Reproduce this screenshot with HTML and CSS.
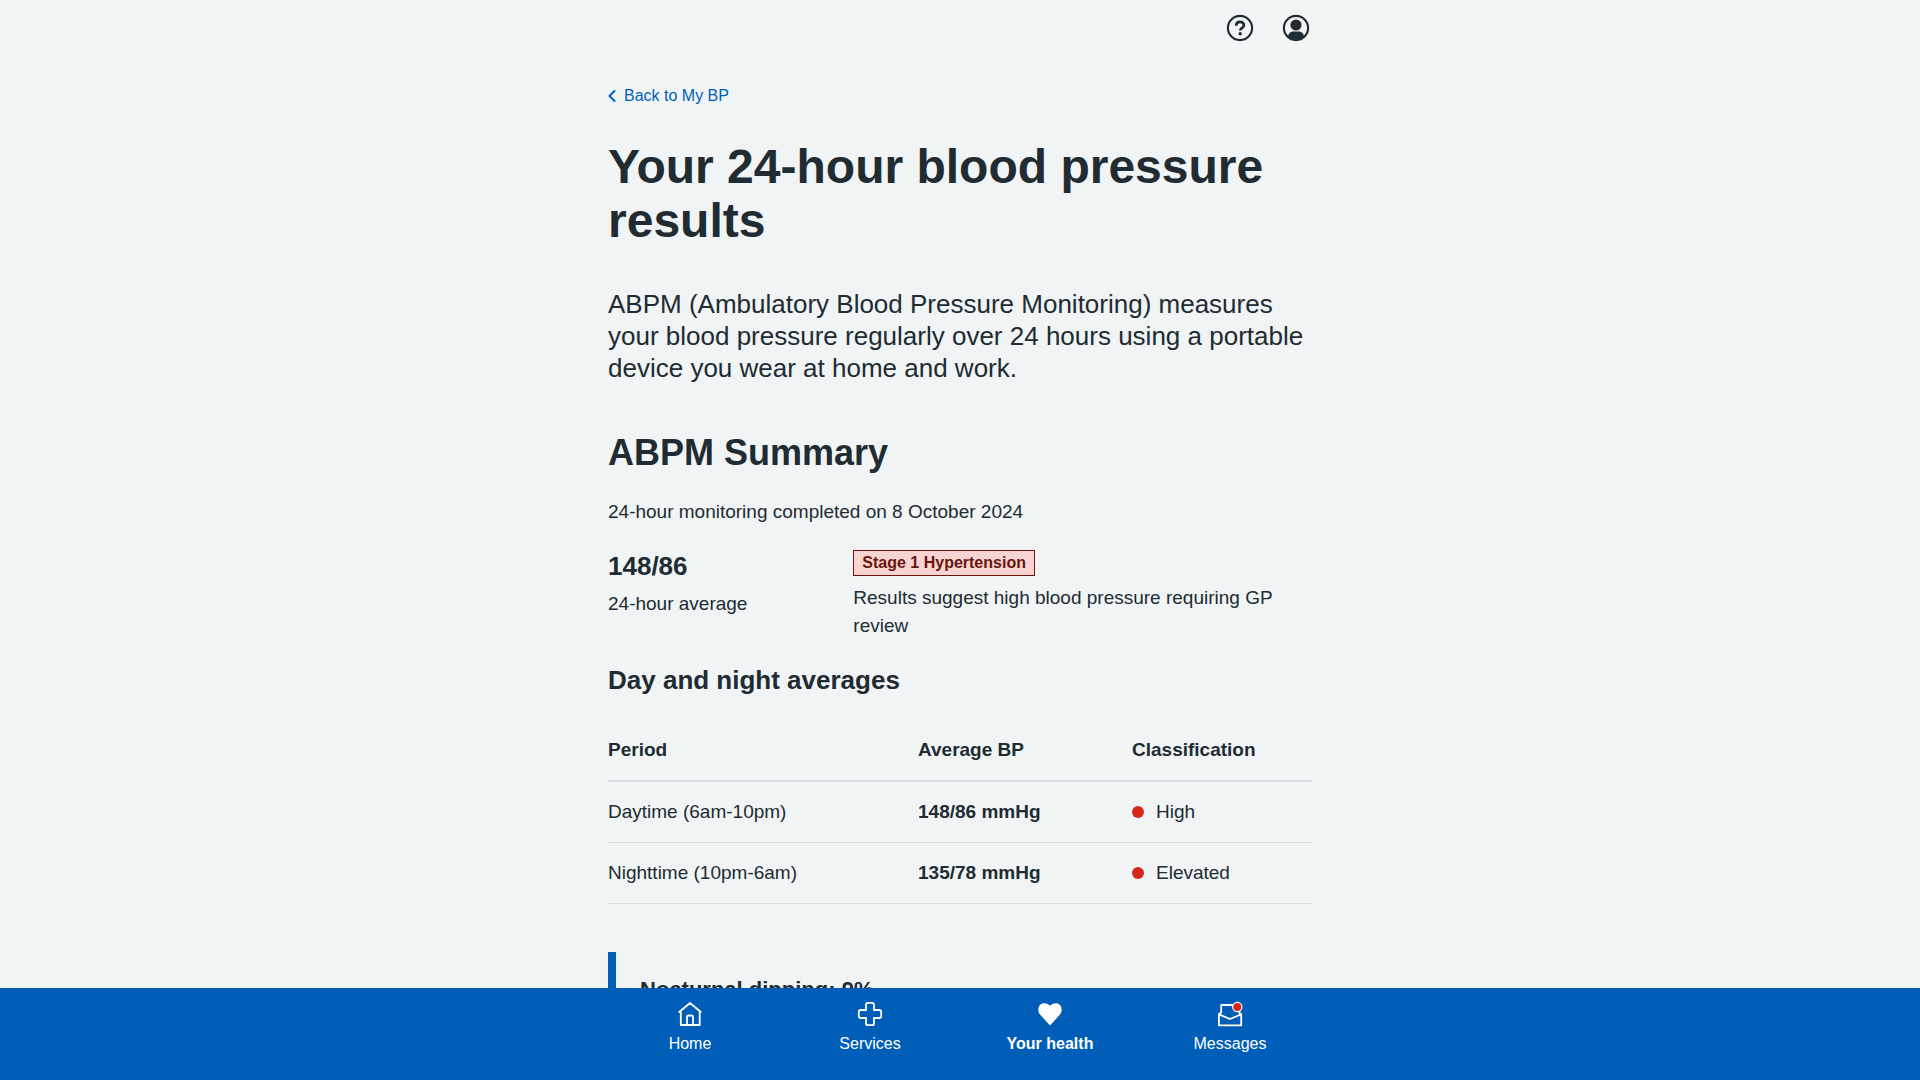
FILE: index.html
```html
<!DOCTYPE html>
<html lang="en">
<head>
<meta charset="utf-8">
<meta name="viewport" content="width=device-width, initial-scale=1">
<title>Your 24-hour blood pressure results</title>
<link rel="stylesheet" href="styles.css">
</head>
<body>
<header class="header container">
  <a class="header-link" href="#help" aria-label="Help">
    <svg viewBox="0 0 28 28" width="28" height="28" fill="none" stroke="currentColor" aria-hidden="true">
      <circle cx="14" cy="14" r="12.1" stroke-width="2.1"/>
      <path d="M10.200 11.800c0-2.500 1.600-4 3.800-4s3.900 1.400 3.900 3.500c0 2.600-3.600 2.700-3.600 5.300" stroke-width="2.700"/>
      <circle cx="14.200" cy="19.700" r="1.700" fill="currentColor" stroke="none"/>
    </svg>
  </a>
  <a class="header-link" href="#account" aria-label="Account">
    <svg viewBox="0 0 28 28" width="28" height="28" aria-hidden="true">
      <circle cx="14" cy="14" r="12.1" fill="none" stroke="currentColor" stroke-width="2.1"/>
      <circle cx="14" cy="11" r="5.600" fill="currentColor"/>
      <path d="M6 22.500C6.500 19 8.500 17.500 11 17.500h6c2.500 0 4.500 1.500 5 5C19.500 25 17 26.200 14 26.200S8.500 25 6 22.500z" fill="currentColor"/>
    </svg>
  </a>
</header>
<main class="main container">
  <a class="back-link" href="#my-bp">
    <svg viewBox="0 0 8 12" width="8" height="12" fill="none" stroke="currentColor" stroke-width="2" stroke-linecap="round" stroke-linejoin="round" aria-hidden="true"><path d="M6.500 1 1.500 6l5 5"/></svg>
    Back to My BP
  </a>
  <h1 class="title">Your 24-hour blood pressure results</h1>
  <p class="lead">ABPM (Ambulatory Blood Pressure Monitoring) measures your blood pressure regularly over 24 hours using a portable device you wear at home and work.</p>
  <h2 class="section-title">ABPM Summary</h2>
  <p>24-hour monitoring completed on 8 October 2024</p>
  <div class="summary">
    <div class="reading">
      <p class="reading-value">148/86</p>
      <p>24-hour average</p>
    </div>
    <div class="result">
      <strong class="tag">Stage 1 Hypertension</strong>
      <p>Results suggest high blood pressure requiring GP review</p>
    </div>
  </div>
  <h3 class="subtitle">Day and night averages</h3>
  <table class="averages">
    <thead>
      <tr><th class="col-period" scope="col">Period</th><th class="col-average" scope="col">Average BP</th><th scope="col">Classification</th></tr>
    </thead>
    <tbody>
      <tr><td>Daytime (6am-10pm)</td><td><strong>148/86 mmHg</strong></td><td><span class="status">High</span></td></tr>
      <tr><td>Nighttime (10pm-6am)</td><td><strong>135/78 mmHg</strong></td><td><span class="status">Elevated</span></td></tr>
    </tbody>
  </table>
  <section class="inset">
    <h3 class="inset-title">Nocturnal dipping: 9%</h3>
  </section>
</main>
<nav class="bottom-nav" aria-label="Main">
  <ul class="nav-list">
    <li><a class="nav-link" href="#home">
      <svg viewBox="0 0 28 28" width="28" height="28" fill="none" stroke="currentColor" stroke-width="1.800" stroke-linecap="round" stroke-linejoin="round" aria-hidden="true"><path d="M3.200 12 14 3l10.800 9M4.800 11v14h18.900V11M11 25v-8c0-1 .5-1.500 1.500-1.500h3c1 0 1.500.5 1.500 1.500v8"/></svg>
      Home</a></li>
    <li><a class="nav-link" href="#services">
      <svg viewBox="0 0 28 28" width="28" height="28" fill="none" stroke="currentColor" stroke-width="1.800" aria-hidden="true"><path d="M12 2.800h4q2 0 2 2V10h5.200q2 0 2 2v4q0 2-2 2H18v5.200q0 2-2 2h-4q-2 0-2-2V18H4.800q-2 0-2-2v-4q0-2 2-2H10V4.800q0-2 2-2z"/></svg>
      Services</a></li>
    <li><a class="nav-link nav-link-current" href="#health" aria-current="page">
      <svg viewBox="0 0 28 28" width="28" height="28" fill="currentColor" aria-hidden="true"><path d="M14 25.500 4 14.500C.8 10.700 2.200 3.200 8.200 3.200c2.500 0 4.600 1 5.800 2.600 1.200-1.600 3.300-2.600 5.800-2.600 6 0 7.400 7.500 4.200 11.300z"/></svg>
      Your health</a></li>
    <li><a class="nav-link" href="#messages">
      <svg viewBox="0 0 28 28" width="28" height="28" fill="none" stroke="currentColor" stroke-width="1.800" stroke-linejoin="round" aria-hidden="true"><path d="M5.200 13V5h18.300v9M5.200 12.500 2.900 14.300v11h22.300v-11L23.500 13M2.900 14.300 14 19l11.200-4.700"/><circle cx="21.300" cy="7" r="4.600" fill="#d5281b" stroke-width="1.200"/></svg>
      Messages</a></li>
  </ul>
</nav>
</body>
</html>
```
FILE: styles.css
```css
* {
  box-sizing: border-box;
}

body {
  margin: 0;
  padding-bottom: 92px;
  background: #f0f4f5;
  color: #212b32;
  font: 19px/28px "Liberation Sans", Arial, sans-serif;
}

h1, h2, h3, p {
  margin: 0;
}

.container {
  max-width: 736px;
  margin: 0 auto;
  padding: 0 16px;
}

.header {
  display: flex;
  justify-content: flex-end;
  align-items: center;
  gap: 28px;
  height: 56px;
  padding-right: 18px;
}

.header-link {
  display: flex;
  color: inherit;
}

.main {
  padding-top: 28px;
}

.back-link {
  display: flex;
  align-items: center;
  gap: 8px;
  width: fit-content;
  color: #005eb8;
  font-size: 16px;
  line-height: 24px;
  text-decoration: none;
}

.title {
  margin: 32px 0 40px;
  font-size: 48px;
  line-height: 54px;
}

.lead {
  font-size: 26px;
  line-height: 32px;
}

.section-title {
  margin: 48px 0 24px;
  font-size: 36px;
  line-height: 42px;
}

.summary {
  display: grid;
  grid-template-columns: repeat(3, minmax(0, 1fr));
  column-gap: 32px;
  margin: 24px 0;
}

.result {
  grid-column: span 2;
}

.reading-value {
  margin-bottom: 8px;
  font-size: 26px;
  font-weight: 700;
  line-height: 32px;
}

.tag {
  display: block;
  width: fit-content;
  margin-bottom: 8px;
  padding: 0 8px;
  border: 1px solid #6b140e;
  background: #f7d4d1;
  color: #6b140e;
  font-size: 16px;
  line-height: 24px;
}

.subtitle {
  margin-bottom: 24px;
  font-size: 26px;
  line-height: 32px;
}

.averages {
  width: 100%;
  border-collapse: separate;
  border-spacing: 0;
  text-align: left;
}

.averages th,
.averages td {
  padding: 16px 16px 16px 0;
  border-bottom: 1px solid #d8dde0;
}

.averages th {
  border-bottom-width: 2px;
}

.averages th:last-child,
.averages td:last-child {
  padding-right: 0;
}

.col-period {
  width: 310px;
}

.col-average {
  width: 214px;
}

.status {
  display: flex;
  align-items: center;
  gap: 12px;
}

.status::before {
  content: "";
  width: 12px;
  height: 12px;
  border-radius: 50%;
  background: #d5281b;
}

.inset {
  margin-top: 48px;
  padding: 24px;
  border-left: 8px solid #005eb8;
}

.inset-title {
  font-size: 22px;
  line-height: 28px;
}

.bottom-nav {
  position: fixed;
  right: 0;
  bottom: 0;
  left: 0;
  padding: 12px 0 24px;
  background: #005eb8;
}

.nav-list {
  display: grid;
  grid-template-columns: repeat(4, 1fr);
  max-width: 720px;
  margin: 0 auto;
  padding: 0;
  list-style: none;
}

.nav-link {
  display: flex;
  flex-direction: column;
  align-items: center;
  gap: 4px;
  color: #fff;
  font-size: 16px;
  line-height: 24px;
  text-decoration: none;
}

.nav-link-current {
  font-weight: 700;
}
```
